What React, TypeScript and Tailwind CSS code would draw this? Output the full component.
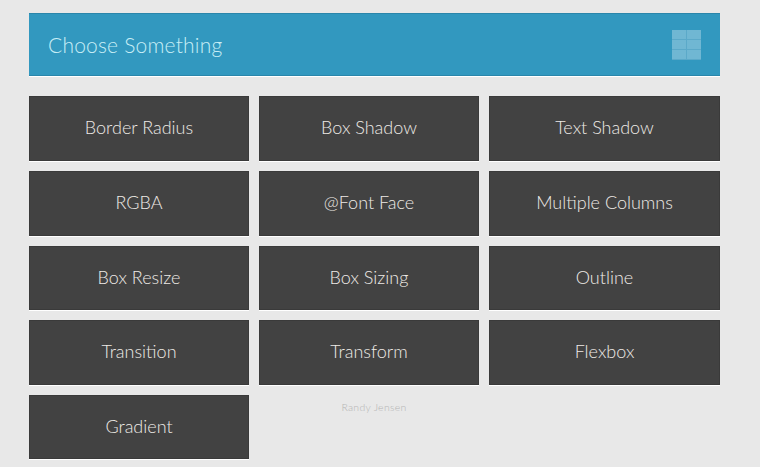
const ITEMS = [
  "Border Radius",
  "Box Shadow",
  "Text Shadow",
  "RGBA",
  "@Font Face",
  "Multiple Columns",
  "Box Resize",
  "Box Sizing",
  "Outline",
  "Transition",
  "Transform",
  "Flexbox",
];

function Tile({ label }: { label: string }) {
  return (
    <div className="flex items-center justify-center bg-[#424242] border border-[#3a3a3a] shadow-[0_1px_0_#ffffff] pb-[2px] text-[18px] font-light text-[#eeeae6]">
      {label}
    </div>
  );
}

export default function App() {
  return (
    <div className="h-[467px] w-[760px] overflow-hidden bg-[#e8e8e8] pl-[29px] pt-[13px] font-['Lato','Open_Sans',sans-serif]">
      <div className="flex h-[63px] w-[691px] items-center justify-between border-t border-b border-t-[#2a86ab] border-b-[#2a86ab] bg-[#3298bf] pl-[19px] pr-[19px] shadow-[0_1px_0_#ffffff]">
        <h1 className="text-[21px] font-light tracking-[0.2px] text-[#c8eef6]">Choose Something</h1>
        <div className="grid h-[30px] w-[29px] grid-cols-2 grid-rows-3 gap-px bg-[#5ba9c9]">
          {[0, 1, 2, 3, 4, 5].map((i) => (
            <div key={i} className="bg-[#70b7d3]" />
          ))}
        </div>
      </div>
      <div className="mt-[20px] grid w-[691px] grid-cols-[220px_220px_231px] grid-rows-[65px_65px_64px_65px_64px] gap-x-[10px] gap-y-[10px]">
        {ITEMS.map((item) => (
          <Tile key={item} label={item} />
        ))}
        <Tile label="Gradient" />
        <div className="flex items-start justify-center pl-[10px] pt-[5px] text-[10.5px] font-light tracking-[0.3px] text-[#b4b4b4]">
          Randy Jensen
        </div>
      </div>
    </div>
  );
}
